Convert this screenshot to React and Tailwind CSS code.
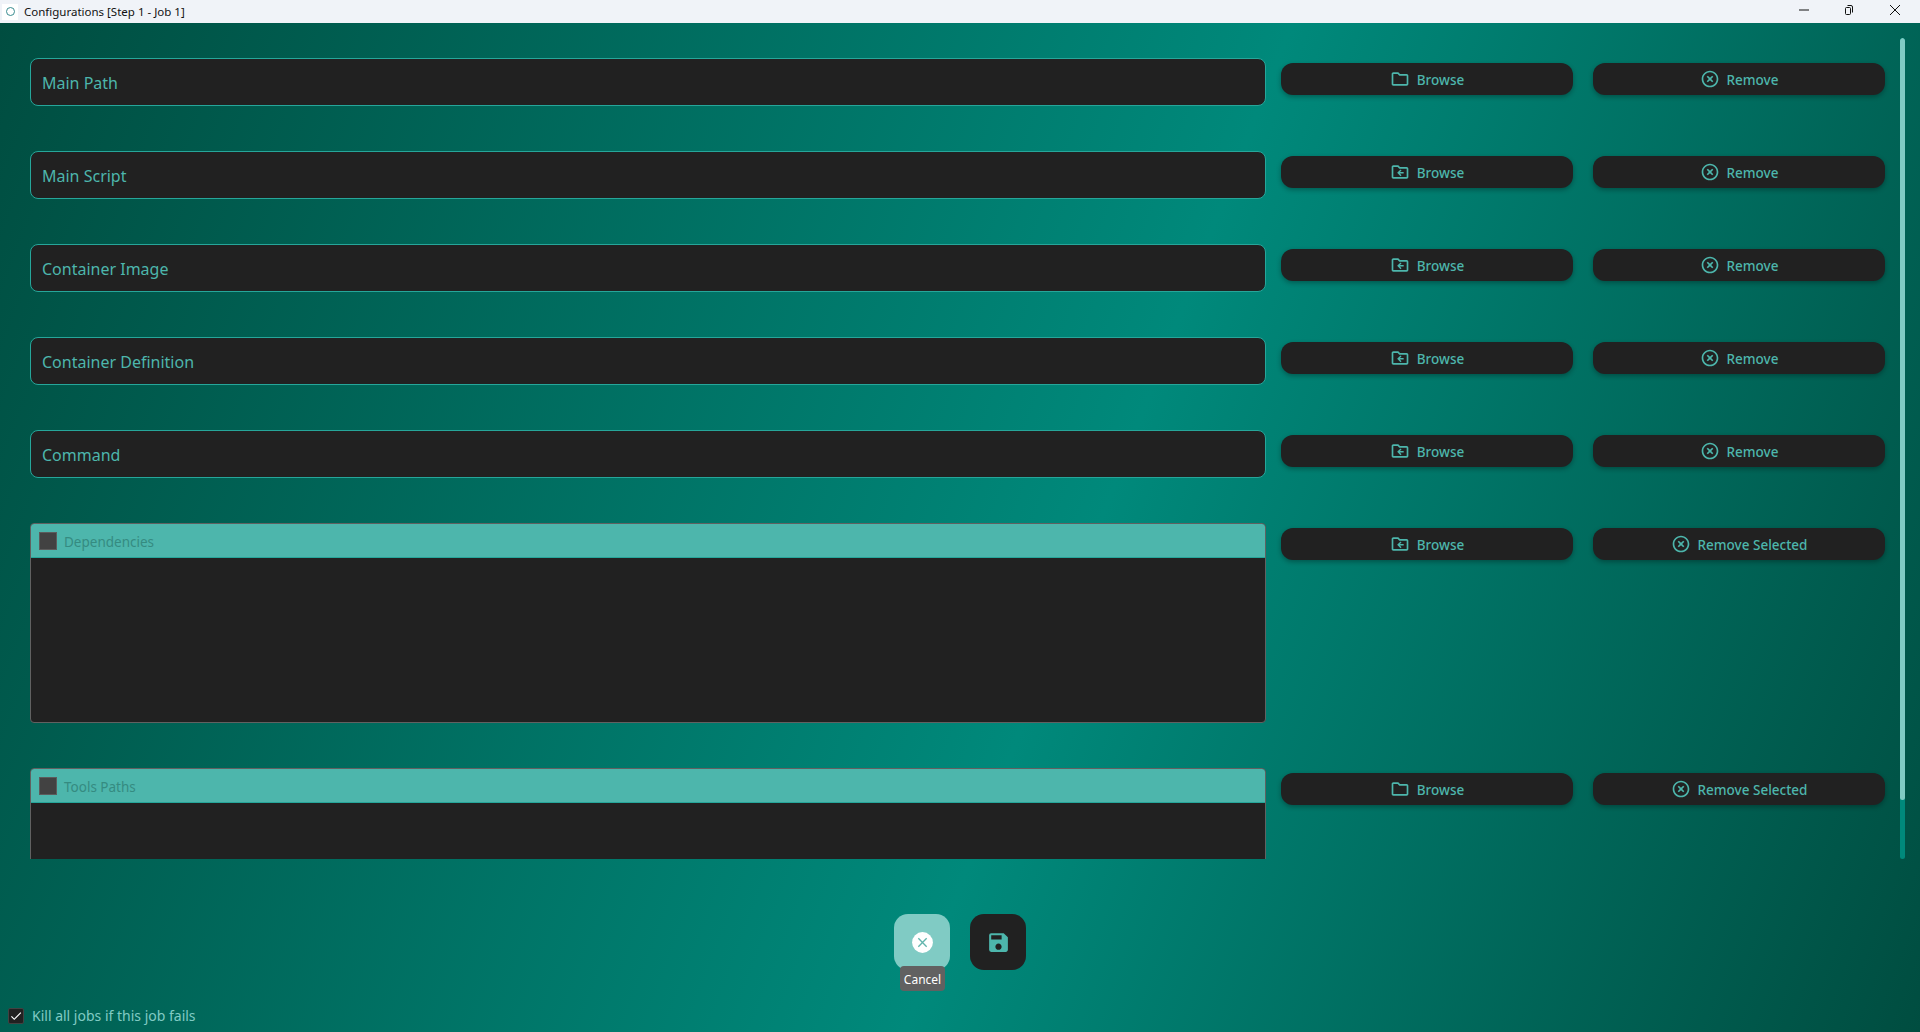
import { MdOutlineFolder, MdHighlightOff, MdCheck, MdSave } from 'react-icons/md';

const rows = ['Main Path', 'Main Script', 'Container Image', 'Container Definition', 'Command'];

function FolderBack({ className }) {
    return (
        <svg viewBox="0 0 24 24" className={className} fill="currentColor">
            <path d="M20 6h-8l-2-2H4c-1.1 0-2 .9-2 2v12c0 1.1.9 2 2 2h16c1.1 0 2-.9 2-2V8c0-1.1-.9-2-2-2zm0 12H4V6h5.17l2 2H20v10z" />
            <path d="M12.6 9 8.6 13l4 4 1.2-1.2-1.9-1.9h4.5v-1.8h-4.5l1.9-1.9z" />
        </svg>
    );
}

function CancelIcon({ className }) {
    return (
        <svg viewBox="0 0 24 24" className={className}>
            <circle cx="12" cy="12" r="10" fill="#fff" />
            <path d="M8 8l8 8M16 8l-8 8" stroke="#62b5ad" strokeWidth="1.3" fill="none" />
        </svg>
    );
}

function ActionButton({ icon: Icon, text }) {
    return (
        <button className="flex h-8 w-[292px] shrink-0 items-center justify-center gap-[7px] rounded-[12px] bg-[#212121] text-[13.5px] font-medium text-[#4db6ac] shadow-[0_2px_5px_rgba(0,0,0,0.3)]">
            <Icon className="size-5" />
            <span className="pt-[2px]">{text}</span>
        </button>
    );
}

function ListBox({ label, className }) {
    return (
        <div className={`flex w-[1236px] shrink-0 flex-col overflow-hidden rounded-[4px] border border-[#616161] bg-[#212121] ${className}`}>
            <div className="flex h-[34px] shrink-0 items-center gap-[7px] border-b border-[#26a69a] bg-[#4db6ac] pl-2 text-[13.5px] text-[#358b81]">
                <div className="size-[18px] border border-[#5c5c5c] bg-[#424242]" />
                <span className="pt-[4px]">{label}</span>
            </div>
        </div>
    );
}

export default function App() {
    return (
        <div className="flex h-[1032px] w-[1920px] flex-col overflow-hidden font-['Noto_Sans',sans-serif]">
            <div className="flex h-[23px] shrink-0 items-center justify-between bg-[#f0f3f8] text-[11.5px] text-[#111]">
                <div className="flex items-center gap-[6px] pl-[2px]">
                    <div className="flex size-4 items-center justify-center bg-white">
                        <div className="size-[9px] rounded-full border-[1.5px] border-[#3a8c90]" />
                    </div>
                    <span>Configurations [Step 1 - Job 1]</span>
                </div>
                <div className="mb-[3px] flex items-center gap-[35px] pr-[19px] text-[#111]">
                    <svg viewBox="0 0 10 10" className="size-[10px]"><path d="M0 5h10" stroke="currentColor" strokeWidth="1" /></svg>
                    <svg viewBox="0 0 10 10" className="size-[10px]" fill="none" stroke="currentColor"><rect x="1.5" y="2.5" width="5" height="7" rx="1" /><path d="M3.5 .5h3.5a1.5 1.5 0 0 1 1.5 1.5v5.5" /></svg>
                    <svg viewBox="0 0 12 12" className="size-3" fill="none" stroke="currentColor"><path d="M1 1l10 10M11 1L1 11" /></svg>
                </div>
            </div>

            <div className="flex flex-1 flex-col bg-[linear-gradient(111deg,#004d40_0%,#00897b_56%,#004d40_100%)]">
                <div className="flex h-[837px] shrink-0">
                    <div className="flex h-[836px] w-[1900px] shrink-0 flex-col overflow-hidden pl-[30px] pt-[35px]">
                        {rows.map((label, i) => (
                            <div key={label} className="mb-[45px] flex h-[48px] shrink-0 items-start">
                                <div className="flex h-[48px] w-[1236px] shrink-0 items-center rounded-[8px] border border-[#26a69a] bg-[#212121] pl-[11px] pt-[2px] text-[16px] text-[#4db6ac]">
                                    {label}
                                </div>
                                <div className="ml-[15px] mt-[5px] flex gap-5">
                                    <ActionButton icon={i === 0 ? MdOutlineFolder : FolderBack} text="Browse" />
                                    <ActionButton icon={MdHighlightOff} text="Remove" />
                                </div>
                            </div>
                        ))}
                        <div className="mb-[45px] flex h-[200px] shrink-0 items-start">
                            <ListBox label="Dependencies" className="h-[200px]" />
                            <div className="ml-[15px] mt-[5px] flex gap-5">
                                <ActionButton icon={FolderBack} text="Browse" />
                                <ActionButton icon={MdHighlightOff} text="Remove Selected" />
                            </div>
                        </div>
                        <div className="flex h-[91px] shrink-0 items-start overflow-hidden">
                            <ListBox label="Tools Paths" className="h-[200px]" />
                            <div className="ml-[15px] mt-[5px] flex gap-5">
                                <ActionButton icon={MdOutlineFolder} text="Browse" />
                                <ActionButton icon={MdHighlightOff} text="Remove Selected" />
                            </div>
                        </div>
                    </div>
                    <div className="mt-[15px] flex h-[821px] w-[5px] shrink-0 flex-col overflow-hidden rounded-[3px] bg-[#00897b]">
                        <div className="h-[762px] rounded-[3px] bg-[#80cbc4]" />
                    </div>
                </div>

                <div className="flex justify-center gap-5 pt-[54px]">
                    <div className="relative">
                        <button className="flex size-14 items-center justify-center rounded-[14px] bg-[#80cbc4]">
                            <CancelIcon className="size-[25px]" />
                        </button>
                        <div className="absolute left-[6px] top-[52px] flex h-[25px] w-[45px] items-center justify-center rounded-[4px] bg-[#616161] pt-[2px] text-[12px] text-white">Cancel</div>
                    </div>
                    <button className="flex size-14 items-center justify-center rounded-[14px] bg-[#212121]">
                        <MdSave className="size-[25px] text-[#4db6ac]" />
                    </button>
                </div>

                <div className="mt-auto flex items-center gap-[8px] pb-[6px] pl-2 text-[14px] text-[#80cbc4]">
                    <div className="flex size-4 items-center justify-center rounded-[2px] border border-[#424242] bg-[#212121]">
                        <MdCheck className="size-4 text-white" />
                    </div>
                    <span>Kill all jobs if this job fails</span>
                </div>
            </div>
        </div>
    );
}
